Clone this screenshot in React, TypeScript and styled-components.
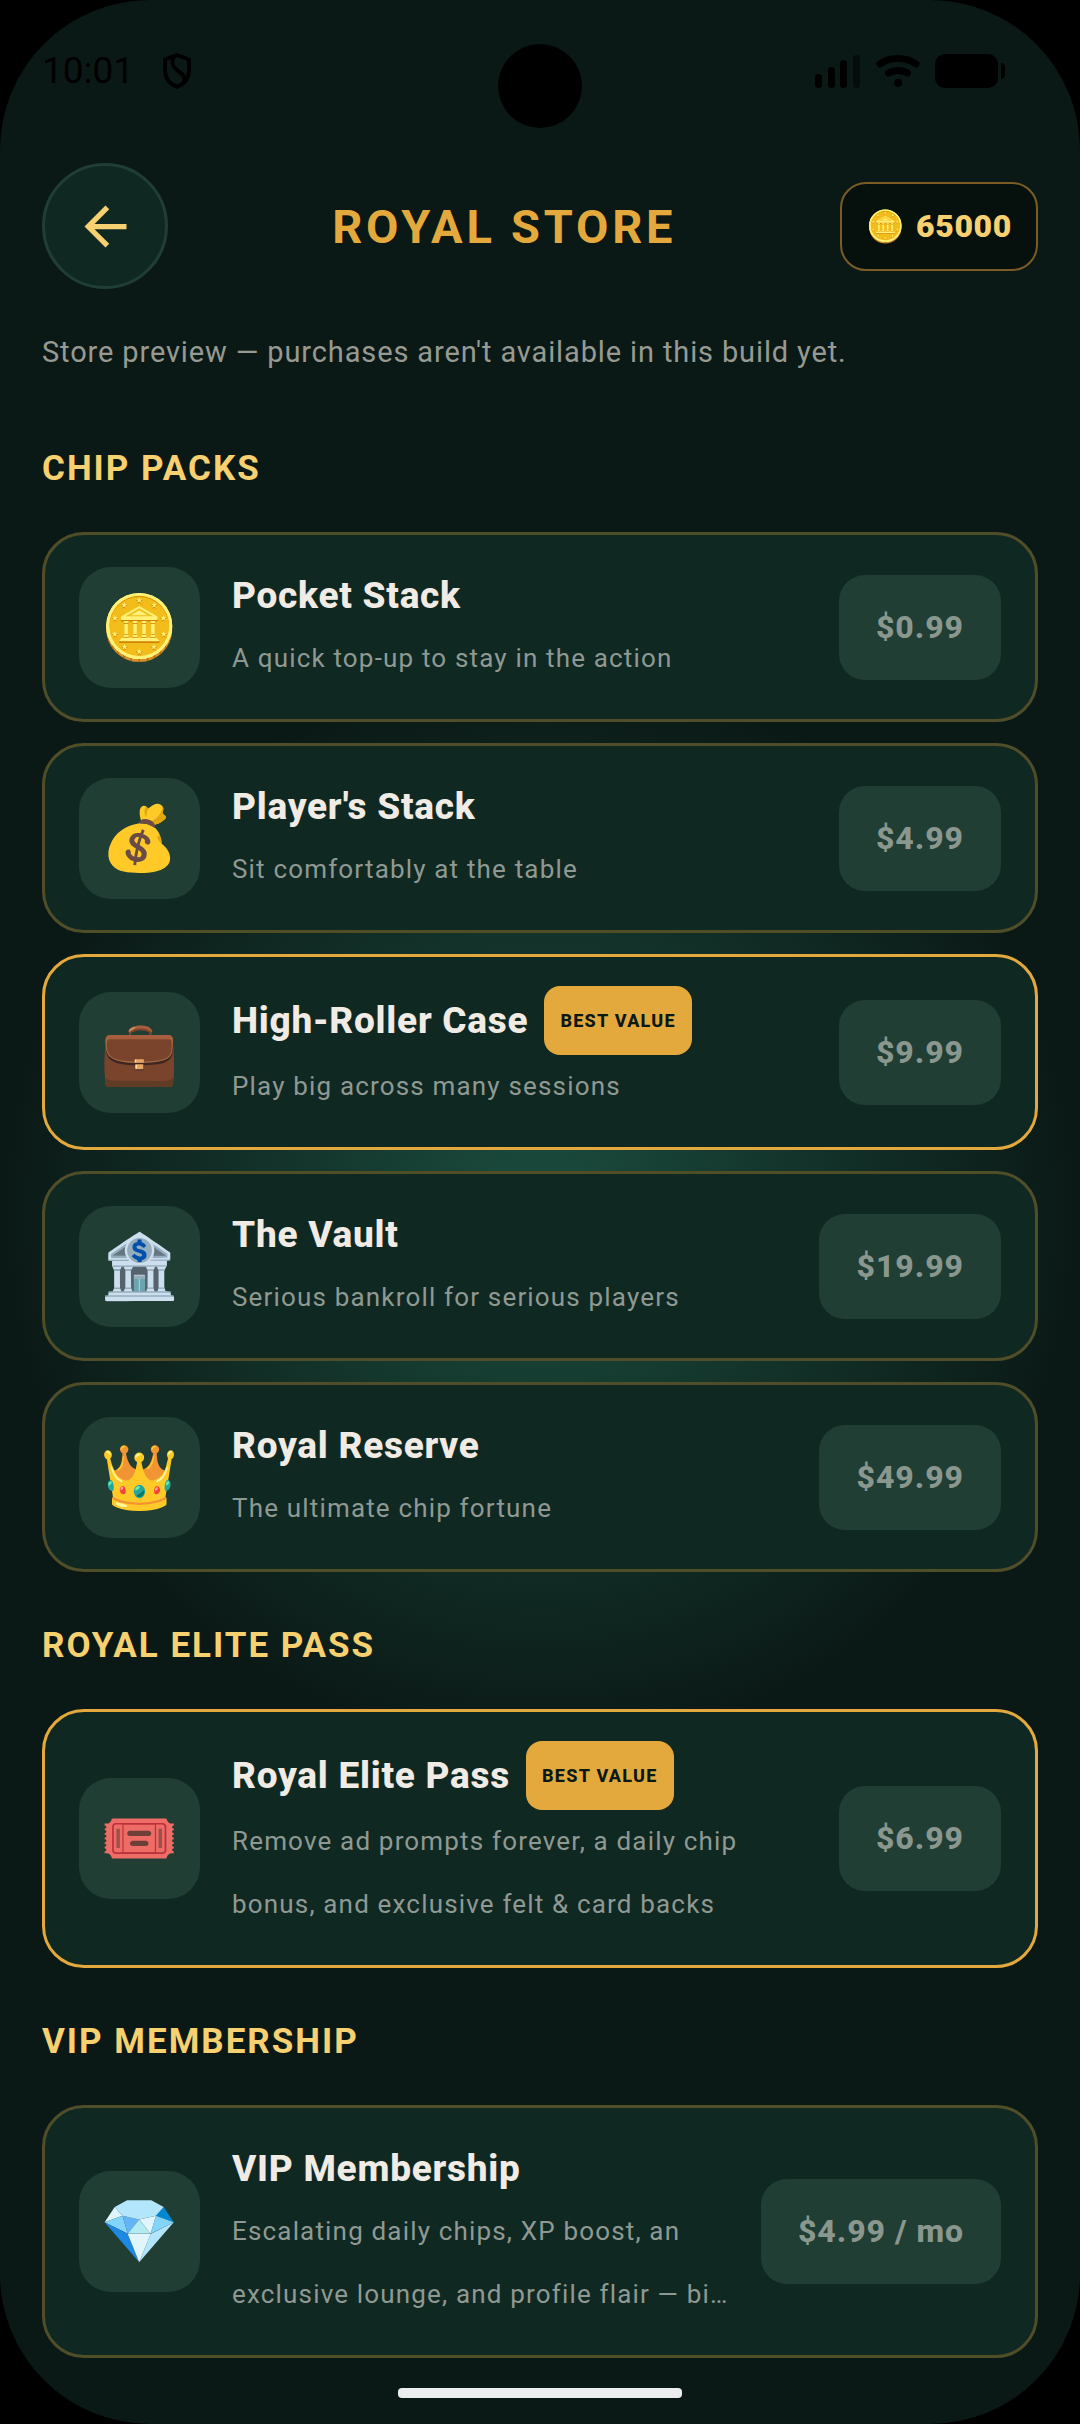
import React from "react";
import styled, { createGlobalStyle } from "styled-components";

const GlobalStyle = createGlobalStyle`
  *, *::before, *::after { box-sizing: border-box; }
  html, body { margin: 0; background: #000; }
  body { font-family: Roboto, "Liberation Sans", sans-serif; }
  h1, h2, h3, p, ul { margin: 0; padding: 0; }
`;

const color = {
  night: "#0b1916",
  felt: "#1b4d3e",
  panel: "#102822",
  tile: "#203e34",
  gold: "#e4a93c",
  goldSoft: "#f7d070",
  goldDim: "#504d29",
  cream: "#f0ebe4",
  muted: "#8f9993",
};

const Screen = styled.div`
  position: relative;
  display: flex;
  flex-direction: column;
  min-height: 100vh;
  overflow: hidden;
  border-radius: 150px;
  background: radial-gradient(circle closest-side at center, ${color.felt}, ${color.night}) ${color.night};
`;

const Camera = styled.div`
  position: absolute;
  top: 44px;
  left: 50%;
  width: 84px;
  height: 84px;
  margin-left: -42px;
  border-radius: 50%;
  background: #000;
`;

const StatusBar = styled.div`
  display: flex;
  justify-content: space-between;
  align-items: center;
  height: 142px;
  padding: 0 74px 0 42px;
`;

const StatusGroup = styled.div<{ $gap: number }>`
  display: flex;
  align-items: center;
  gap: ${(p) => p.$gap}px;
  font-size: 37px;
  line-height: 44px;
  color: #000;
  svg { display: block; }
`;

const Header = styled.header`
  display: flex;
  align-items: center;
  padding: 21px 42px 0;
`;

const BackButton = styled.button`
  display: grid;
  place-items: center;
  width: 126px;
  height: 126px;
  padding: 0;
  border: 3px solid ${color.tile};
  border-radius: 50%;
  background: ${color.panel};
  color: ${color.goldSoft};
`;

const PageTitle = styled.h1`
  flex: 1;
  text-align: center;
  font-size: 47px;
  line-height: 63px;
  font-weight: 700;
  letter-spacing: 0.08em;
  color: ${color.gold};
`;

const Balance = styled.div`
  display: flex;
  align-items: center;
  gap: 11px;
  padding: 11px 24px;
  border: 2px solid #7b5c26;
  border-radius: 26px;
  background: #06100d;
  font-size: 32px;
  line-height: 63px;
  font-weight: 900;
  letter-spacing: 0.02em;
  color: ${color.goldSoft};
`;

const Main = styled.main`
  flex: 1;
  padding: 32px 42px 30px;
`;

const Notice = styled.p`
  padding-bottom: 11px;
  font-size: 29px;
  line-height: 63px;
  letter-spacing: 0.03em;
  color: #979a93;
`;

const SectionTitle = styled.h2`
  padding: 42px 0 32px;
  font-size: 35px;
  line-height: 63px;
  font-weight: 700;
  letter-spacing: 2px;
  color: ${color.goldSoft};
`;

const CardList = styled.ul`
  display: flex;
  flex-direction: column;
  gap: 21px;
  list-style: none;
`;

const Card = styled.li<{ $featured?: boolean }>`
  display: flex;
  align-items: center;
  gap: 21px;
  padding: 29px 34px;
  border: 3px solid ${(p) => (p.$featured ? color.gold : color.goldDim)};
  border-radius: 42px;
  background: ${color.panel};
`;

const Tile = styled.div`
  display: grid;
  place-items: center;
  flex: none;
  width: 121px;
  height: 121px;
  border-radius: 32px;
  background: ${color.tile};
`;

const Emoji = styled.span<{ $size: number }>`
  font-family: "Noto Color Emoji", sans-serif;
  font-size: ${(p) => p.$size}px;
  line-height: 63px;
  letter-spacing: 0;
  font-weight: 400;
`;

const Info = styled.div`
  flex: 1;
  min-width: 0;
  padding-left: 11px;
`;

const NameRow = styled.div`
  display: flex;
  align-items: center;
  gap: 16px;
`;

const Name = styled.h3`
  font-size: 37px;
  line-height: 63px;
  font-weight: 800;
  letter-spacing: 0.02em;
  color: ${color.cream};
`;

const Badge = styled.span`
  padding: 3px 16px;
  border-radius: 16px;
  background: ${color.gold};
  font-size: 18px;
  line-height: 63px;
  font-weight: 800;
  letter-spacing: 0.07em;
  color: ${color.night};
`;

const Description = styled.p`
  font-size: 26px;
  line-height: 63px;
  letter-spacing: 0.045em;
  color: ${color.muted};
`;

const PriceButton = styled.button`
  flex: none;
  height: 105px;
  padding: 0 37px;
  border: 0;
  border-radius: 26px;
  background: ${color.tile};
  font: 800 32px/63px Roboto, "Liberation Sans", sans-serif;
  letter-spacing: 0.03em;
  color: #8a978e;
`;

const HomeBar = styled.div`
  width: 284px;
  height: 10px;
  margin: 0 auto 26px;
  border-radius: 4px;
  background: #ebeeed;
`;

function ShieldIcon() {
  return (
    <svg width="30" height="36" viewBox="0 0 30 36" fill="none" stroke="#000" strokeWidth="4" strokeLinejoin="round">
      <path d="M15 2 27 6.500V17C27 25 22 31 15 34 8 31 3 25 3 17V6.500Z" />
      <path d="M12 3C9 9 10 13 15 17S23 22 22 29" />
    </svg>
  );
}

function SignalIcon() {
  return (
    <svg width="46" height="34" viewBox="0 0 46 34">
      <rect x="0" y="20" width="7" height="14" rx="3.500" />
      <rect x="13" y="13" width="7" height="21" rx="3.500" />
      <rect x="25" y="6" width="7" height="28" rx="3.500" />
      <rect x="38" y="1" width="7" height="33" rx="3.500" opacity="0.5" />
    </svg>
  );
}

function WifiIcon() {
  return (
    <svg width="44" height="34" viewBox="0 0 44 34" fill="none" stroke="#000" strokeWidth="7" strokeLinecap="round">
      <path d="M4 10C14 2.500 30 2.500 40 10" />
      <path d="M12.500 19C18 15.500 26 15.500 31.500 19" />
      <circle cx="22" cy="29" r="4" fill="#000" stroke="none" />
    </svg>
  );
}

function BatteryIcon() {
  return (
    <svg width="71" height="34" viewBox="0 0 71 34">
      <rect width="63" height="34" rx="10" />
      <path d="M66 9Q70 9 70 14V20Q70 25 66 25Z" />
    </svg>
  );
}

function ArrowIcon() {
  return (
    <svg width="63" height="63" viewBox="0 0 24 24" fill="currentColor">
      <path d="M20 11H7.830l5.590-5.590L12 4l-8 8 8 8 1.410-1.410L7.830 13H20v-2z" />
    </svg>
  );
}

type Product = {
  emoji: string;
  name: string;
  description: string;
  price: string;
  best?: boolean;
};

const sections: { title: string; products: Product[] }[] = [
  {
    title: "CHIP PACKS",
    products: [
      { emoji: "🪙", name: "Pocket Stack", description: "A quick top-up to stay in the action", price: "$0.99" },
      { emoji: "💰", name: "Player's Stack", description: "Sit comfortably at the table", price: "$4.99" },
      { emoji: "💼", name: "High-Roller Case", description: "Play big across many sessions", price: "$9.99", best: true },
      { emoji: "🏦", name: "The Vault", description: "Serious bankroll for serious players", price: "$19.99" },
      { emoji: "👑", name: "Royal Reserve", description: "The ultimate chip fortune", price: "$49.99" },
    ],
  },
  {
    title: "ROYAL ELITE PASS",
    products: [
      {
        emoji: "🎟️",
        name: "Royal Elite Pass",
        description: "Remove ad prompts forever, a daily chip bonus, and exclusive felt & card backs",
        price: "$6.99",
        best: true,
      },
    ],
  },
  {
    title: "VIP MEMBERSHIP",
    products: [
      {
        emoji: "💎",
        name: "VIP Membership",
        description: "Escalating daily chips, XP boost, an exclusive lounge, and profile flair — bi…",
        price: "$4.99 / mo",
      },
    ],
  },
];

function ProductCard({ product }: { product: Product }) {
  return (
    <Card $featured={product.best}>
      <Tile>
        <Emoji $size={63}>{product.emoji}</Emoji>
      </Tile>
      <Info>
        <NameRow>
          <Name>{product.name}</Name>
          {product.best && <Badge>BEST VALUE</Badge>}
        </NameRow>
        <Description>{product.description}</Description>
      </Info>
      <PriceButton type="button">{product.price}</PriceButton>
    </Card>
  );
}

export default function App() {
  return (
    <>
      <GlobalStyle />
      <Screen>
        <Camera />
        <StatusBar>
          <StatusGroup $gap={28}>
            <span>10:01</span>
            <ShieldIcon />
          </StatusGroup>
          <StatusGroup $gap={15}>
            <SignalIcon />
            <WifiIcon />
            <BatteryIcon />
          </StatusGroup>
        </StatusBar>
        <Header>
          <BackButton type="button" aria-label="Back">
            <ArrowIcon />
          </BackButton>
          <PageTitle>ROYAL STORE</PageTitle>
          <Balance>
            <Emoji $size={31}>🪙</Emoji>
            <span>65000</span>
          </Balance>
        </Header>
        <Main>
          <Notice>Store preview — purchases aren't available in this build yet.</Notice>
          {sections.map((section) => (
            <section key={section.title}>
              <SectionTitle>{section.title}</SectionTitle>
              <CardList>
                {section.products.map((product) => (
                  <ProductCard key={product.name} product={product} />
                ))}
              </CardList>
            </section>
          ))}
        </Main>
        <HomeBar />
      </Screen>
    </>
  );
}
